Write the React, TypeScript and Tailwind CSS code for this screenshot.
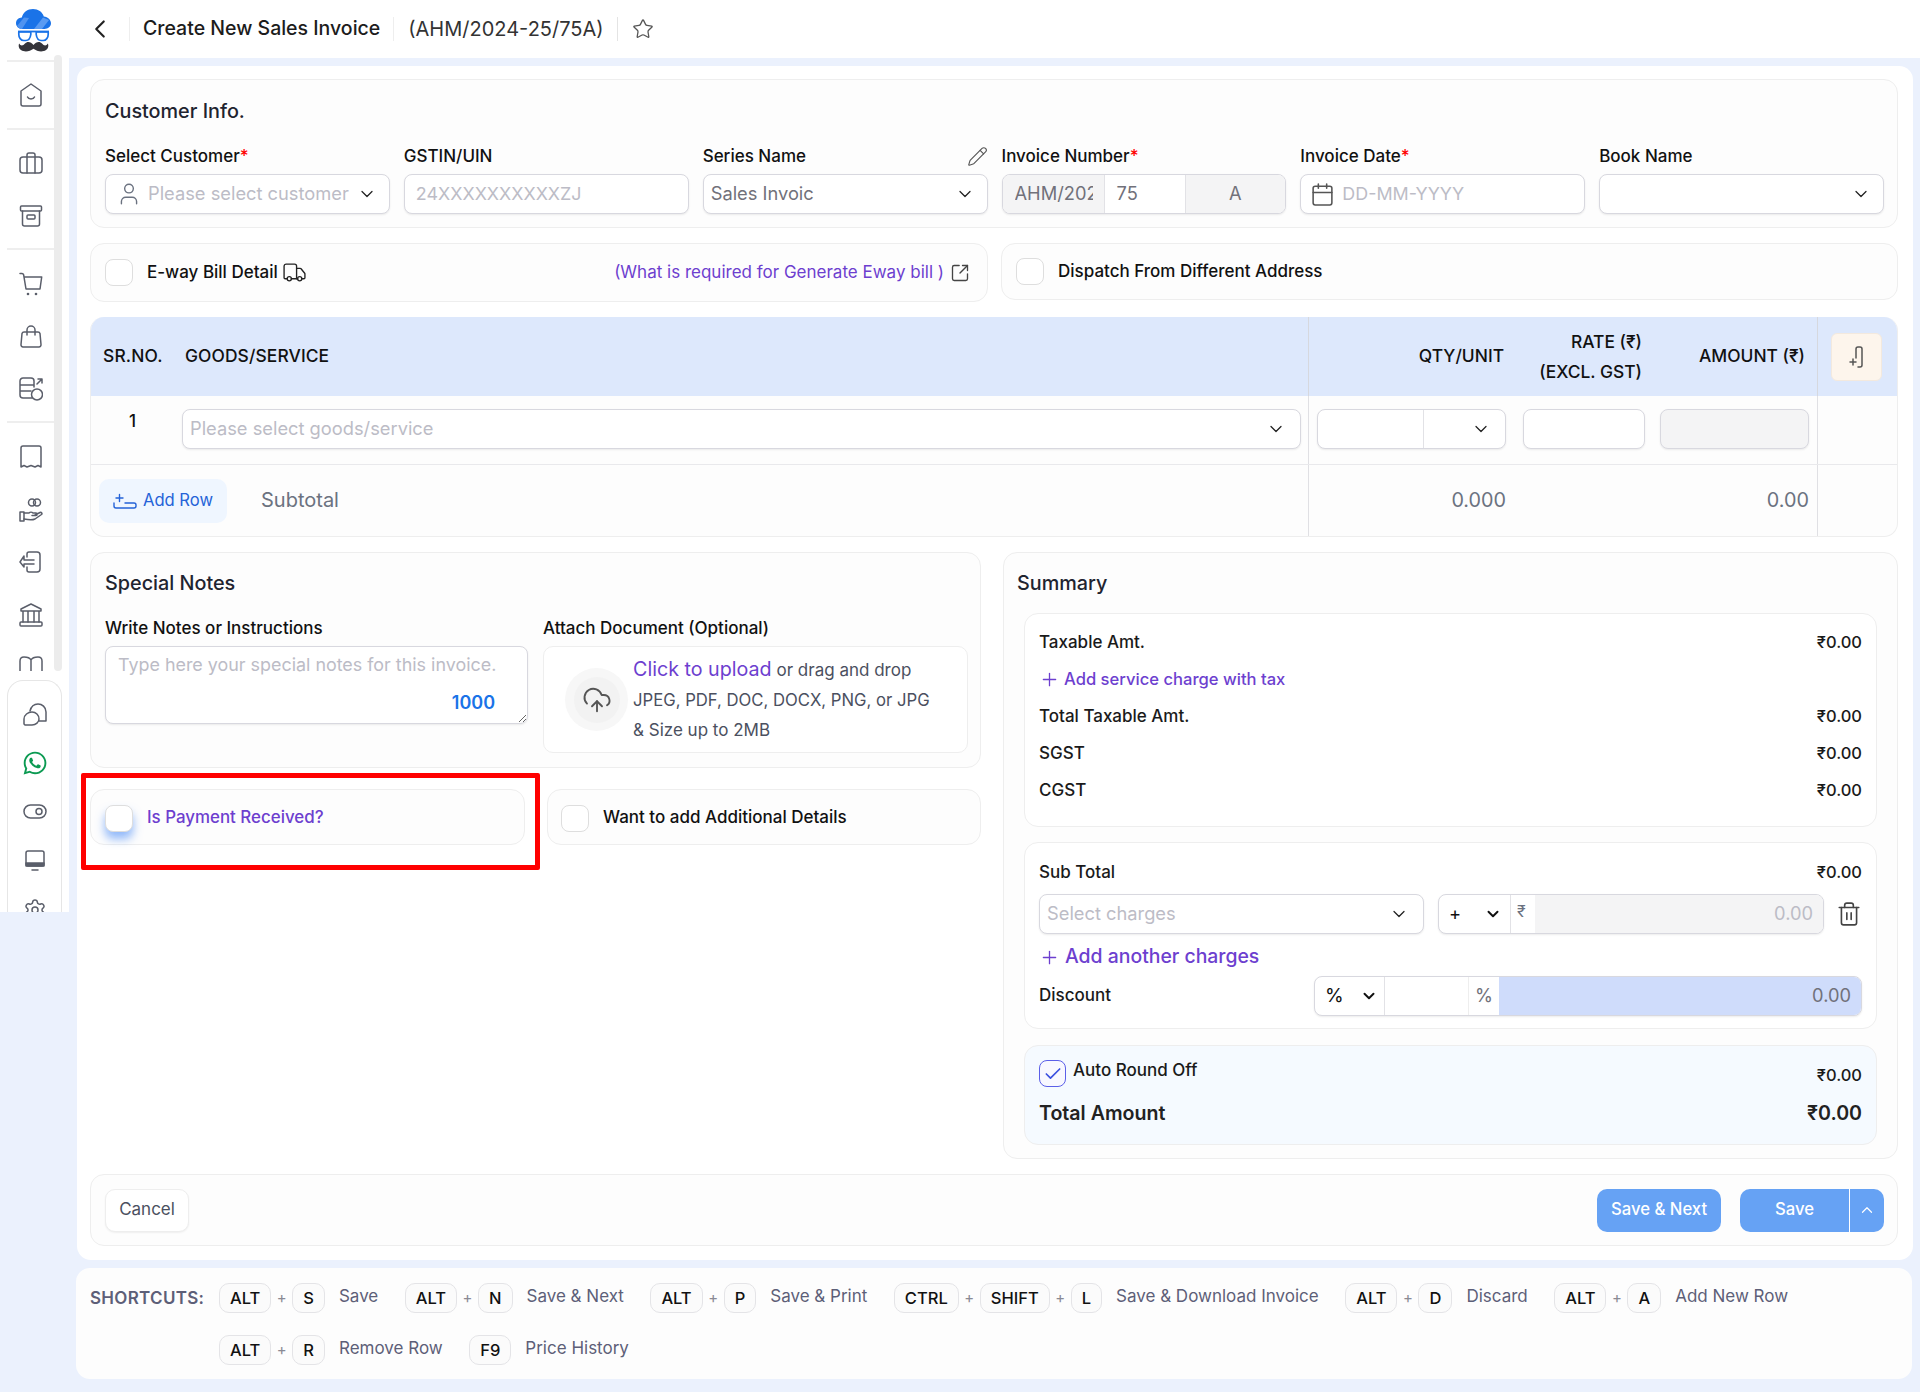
import React from "react";
import { ChevronLeft, ChevronDown, ChevronUp, Star, Pencil, Truck, SquareArrowOutUpRight, User, Calendar, CloudUpload, Trash2, Plus, Check, Settings } from "lucide-react";
import { FaWhatsapp } from "react-icons/fa";

const Ic = ({ children }: { children: React.ReactNode }) => (
  <svg width="24" height="24" viewBox="0 0 24 24" fill="none" stroke="#5a5e6a" strokeWidth="1.5" strokeLinecap="round" strokeLinejoin="round">{children}</svg>
);

const Logo = () => (
  <svg width="35" height="43" viewBox="0 0 35 43" fill="none">
    <path d="M6.5 20C2.9 20 0 17.5 0 14.2 0 11 2.5 8.6 5.8 8.4 7 3.5 11.5 0 17 0c5.2 0 9.4 3 10.8 7.4C32 8 35 10.8 35 14.3 35 17.6 32 20 28.5 20Z" fill="#1a73e8" />
    <path d="M1 17 8 8.5 13 9 6 20H4Z" fill="#4f93f0" />
    <path d="M18 20 27 8.5 33 11 26 20Z" fill="#5a9bf2" />
    <path d="M2 22.5H33" stroke="#1a73e8" strokeWidth="1.8" />
    <path d="M2.8 23v2.5c0 3 2 6 5 6h2c2.5 0 4.5-2.5 5-6V23ZM20.2 23v2.5c.5 3.5 2.5 6 5 6h2c3 0 5-3 5-6V23Z" stroke="#1a73e8" strokeWidth="1.7" strokeLinejoin="round" />
    <path d="M17.5 36C15 32.5 11 32 9 34.5 7 37 4.5 37 3.2 34.5 2 37 3 39.5 5 41 8.5 43.5 14 42.5 17.5 39.8 21 42.5 26.5 43.5 30 41 32 39.5 33 37 31.8 34.5 30.5 37 28 37 26 34.5 24 32 20 32.5 17.5 36Z" fill="#34343a" />
  </svg>
);

const icons: Record<string, React.ReactNode> = {
  home: <Ic><path d="M12 1 22 8V21a2 2 0 0 1-2 2H4a2 2 0 0 1-2-2V8Z" /><path d="M8.5 14c1 2.5 6 2.5 7 0" /></Ic>,
  brief: <Ic><rect x="1" y="6" width="22" height="16" rx="3" /><path d="M8 6V4a2 2 0 0 1 2-2h4a2 2 0 0 1 2 2v2M8 6v16M16 6v16" /></Ic>,
  archive: <Ic><rect x="1.5" y="2" width="21" height="5" rx="1" /><path d="M3.5 7v13a2 2 0 0 0 2 2h13a2 2 0 0 0 2-2V7" /><rect x="8" y="11" width="8" height="4" rx="1" /></Ic>,
  cart: <Ic><path d="M1 1.5h2c.8 0 1.4.5 1.6 1.2L7 17h14l1.7-12H5" /><circle cx="9" cy="22" r="1.3" fill="#5a5e6a" stroke="none" /><circle cx="17" cy="22" r="1.3" fill="#5a5e6a" stroke="none" /></Ic>,
  bag: <Ic><path d="M5 7h14c1 0 1.7.6 2 1.5l1 11c.1 1.5-.8 2.5-2 2.5H4c-1.2 0-2.1-1-2-2.5l1-11C3.3 7.6 4 7 5 7z" /><path d="M8 10V5a4 4 0 0 1 8 0v5" /></Ic>,
  data: <Ic><path d="M13 21H4a3 3 0 0 1-3-3V4a3 3 0 0 1 3-3h8a3 3 0 0 1 3 3v6M1 8h14M1 14h11" /><circle cx="18" cy="17.5" r="5.5" /><path d="m18 7 5-5M19 2h4v4" /></Ic>,
  receipt: <Ic><path d="M2 3a2 2 0 0 1 2-2h16a2 2 0 0 1 2 2v19l-3-1.5-3 1.5-4-1.5-4 1.5-3-1.5-3 1.5z" /></Ic>,
  hand: <Ic><circle cx="13" cy="4.5" r="3.5" /><circle cx="18" cy="4.5" r="3.5" /><rect x="1" y="14" width="4" height="9" /><path d="M5 15h5c1-1 3-1 4 0h3c1.5 0 1.5 2.5 0 2.5h-4M16 17l5-2.5c1.5-.5 2.5 1 1.5 2L16 21c-2 1-6 1-11 0" /></Ic>,
  login: <Ic><path d="M8 7V4a2 2 0 0 1 2-2h8c2 0 3 1 3 3v14c0 2-1 3-3 3h-8a2 2 0 0 1-2-2v-3" /><path d="M15 10H5V6L1 12l4 5v-3h10" /></Ic>,
  bank: <Ic><path d="M12 1 2 6v2h20V6zM4 8v11M9 8v11M15 8v11M20 8v11" /><rect x="1" y="19" width="22" height="4" rx="1" /></Ic>,
  book: <Ic><path d="M1 22V6c0-2 1-4 4-4 3 0 6 1 7 3 1-2 4-3 7-3 3 0 4 2 4 4v16M12 5v17" /></Ic>,
  chat: <Ic><path d="M7 9C8 5 11 2 15 2c4 0 8 3 8 8v9h-7" /><path d="M9 10a7 7 0 0 1 7 7c0 3-3 6-7 6H2l-1-1v-5c0-4 4-7 8-7z" /></Ic>,
  toggle: <Ic><rect x="1" y="5" width="22" height="13" rx="6.5" /><circle cx="16" cy="11.5" r="3" /></Ic>,
  monitor: <Ic><rect x="3" y="2" width="18" height="15" rx="2" /><path d="M3 14h18v3H3z" fill="#5a5e6a" /><path d="M9 21h6" /></Ic>,
};

const SideRow = ({ name }: { name: string }) => (
  <div className="h-[52.5px] shrink-0 flex items-center justify-center">{icons[name]}</div>
);
const BotRow = ({ children }: { children: React.ReactNode }) => (
  <div className="h-[49px] shrink-0 flex items-center justify-center">{children}</div>
);

const Sidebar = () => (
  <div className="w-[69px] h-[912px] shrink-0 bg-white">
    <div className="flex">
      <div className="w-[47px] ml-[7px] h-[671px] overflow-hidden">
        <div className="h-[62px] border-b-2 border-[#eeeeee] flex items-start pt-[9px] pl-[9px]"><Logo /></div>
        <div className="h-[68px] border-b-2 border-[#eeeeee] pt-[7px]"><SideRow name="home" /></div>
        <div className="h-[120px] border-b-2 border-[#eeeeee] pt-[7px]"><SideRow name="brief" /><SideRow name="archive" /></div>
        <div className="h-[173px] border-b-2 border-[#eeeeee] pt-[8px]"><SideRow name="cart" /><SideRow name="bag" /><SideRow name="data" /></div>
        <div className="pt-[8px]"><SideRow name="receipt" /><SideRow name="hand" /><SideRow name="login" /><SideRow name="bank" /><SideRow name="book" /></div>
      </div>
      <div className="w-[8px] h-[616px] mt-[55px] rounded-full bg-[#ececec]" />
    </div>
    <div className="ml-[7px] mt-[9px] w-[55px] h-[232px] border border-b-0 border-[#e6e6e6] rounded-t-[16px] overflow-hidden pt-[8px] flex flex-col">
      <BotRow>{icons.chat}</BotRow>
      <BotRow><FaWhatsapp size={26} color="#0b9a52" /></BotRow>
      <BotRow>{icons.toggle}</BotRow>
      <BotRow>{icons.monitor}</BotRow>
      <BotRow><Settings size={24} color="#5a5e6a" strokeWidth={1.5} /></BotRow>
    </div>
  </div>
);

const Label = ({ children, req }: { children: React.ReactNode; req?: boolean }) => (
  <div className="text-[17px] leading-[24px] font-medium text-[#111111]">{children}{req && <span className="text-[#ff0000]">*</span>}</div>
);

const Chev = () => <ChevronDown size={20} strokeWidth={1.5} color="#222" className="shrink-0" />;
const inputCls = "h-[40px] border border-[#d8d8df] rounded-[8px] bg-white shadow-[0_1px_2px_rgba(0,0,0,0.08)] text-[18.3px]";

const Box = ({ className = "", children }: { className?: string; children: React.ReactNode }) => (
  <div className={`border border-[#eeeeee] rounded-[14px] bg-[#fdfdfd] ${className}`}>{children}</div>
);

const Checkbox = ({ extra = "" }: { extra?: string }) => (
  <div className={`w-[28px] h-[27px] shrink-0 border border-[#dedede] rounded-[8px] bg-white ${extra}`} />
);

const CustomerInfo = () => (
  <Box className="h-[149px] pl-[14px] pr-[13px] pt-[19px]">
    <div className="text-[19.8px] leading-[24px] font-medium text-[#1f2430]">Customer Info.</div>
    <div className="grid grid-cols-6 gap-x-[14px] mt-[21px]">
      <div>
        <Label req>Select Customer</Label>
        <div className={`${inputCls} mt-[6px] flex items-center pl-[10px] pr-[12px] text-[#bcbcc6]`}>
          <User size={26} strokeWidth={1.3} color="#6b7280" className="shrink-0" />
          <span className="ml-[6px] flex-1 whitespace-nowrap overflow-hidden">Please select customer</span>
          <Chev />
        </div>
      </div>
      <div>
        <Label>GSTIN/UIN</Label>
        <div className={`${inputCls} mt-[6px] flex items-center pl-[11px] text-[#bcbcc6]`}><span className="text-[17.9px]">24XXXXXXXXXXZJ</span></div>
      </div>
      <div>
        <div className="flex items-center justify-between">
          <Label>Series Name</Label>
          <Pencil size={21} strokeWidth={1.3} color="#555" />
        </div>
        <div className={`${inputCls} mt-[6px] flex items-center justify-between pl-[7px] pr-[12px] text-[#71717a]`}>
          <span>Sales Invoic</span><Chev />
        </div>
      </div>
      <div>
        <Label req>Invoice Number</Label>
        <div className={`${inputCls} mt-[6px] flex overflow-hidden text-[#71717a]`}>
          <div className="w-[102px] bg-[#f4f4f5] pl-[12px] flex items-center whitespace-nowrap border-r border-[#e2e2e6]"><span className="w-[78px] overflow-hidden">AHM/2024</span></div>
          <div className="w-[81px] bg-white pl-[12px] flex items-center border-r border-[#e2e2e6]">75</div>
          <div className="flex-1 bg-[#f4f4f5] flex items-center justify-center">A</div>
        </div>
      </div>
      <div>
        <Label req>Invoice Date</Label>
        <div className={`${inputCls} mt-[6px] flex items-center pl-[9px] text-[#bcbcc6]`}>
          <Calendar size={25} strokeWidth={1.5} color="#555" />
          <span className="ml-[7px] text-[17.9px]">DD-MM-YYYY</span>
        </div>
      </div>
      <div>
        <Label>Book Name</Label>
        <div className={`${inputCls} mt-[6px] flex items-center justify-end pr-[12px]`}><Chev /></div>
      </div>
    </div>
  </Box>
);

const ToggleRow = () => (
  <div className="flex justify-between items-start mt-[15px]">
    <Box className="w-[898px] h-[59px] flex items-center pl-[14px] pr-[17px]">
      <Checkbox />
      <span className="ml-[14px] text-[17px] font-medium text-[#111]">E-way Bill Detail</span>
      <Truck size={25} strokeWidth={1.3} color="#222" className="ml-[4px]" />
      <span className="ml-auto text-[17px] text-[#6d3fcf]">(What is required for Generate Eway bill )</span>
      <SquareArrowOutUpRight size={20} strokeWidth={1.6} color="#444" className="ml-[6px]" />
    </Box>
    <Box className="w-[897px] h-[57px] flex items-center pl-[14px]">
      <Checkbox />
      <span className="ml-[14px] text-[17px] font-medium text-[#111]">Dispatch From Different Address</span>
    </Box>
  </div>
);

const Table = () => (
  <div className="mt-[15px] border border-[#eeeeee] border-t-0 rounded-[14px] overflow-hidden bg-[#fdfdfd]">
    <div className="h-[79px] flex bg-[#dde8fc] text-[17.4px] font-medium text-[#111]">
      <div className="w-[1217px] flex items-center pl-[12px]">
        <span className="w-[82px] tracking-[0.15px]">SR.NO.</span>
        <span className="tracking-[0.1px]">GOODS/SERVICE</span>
      </div>
      <div className="w-[509px] border-l border-[#d6d8de] flex items-center pl-[8px] text-right">
        <div className="w-[187px]">QTY/UNIT</div>
        <div className="w-[122px] ml-[19px] leading-[30px] pr-[3px]">RATE (₹)<br />(EXCL. GST)</div>
        <div className="w-[149px] ml-[15px] pr-[4px]">AMOUNT (₹)</div>
      </div>
      <div className="flex-1 border-l border-[#d6d8de] flex items-center pl-[13px]">
        <div className="w-[51px] h-[48px] rounded-[6px] bg-[#fdf5ec] border border-[#f3e9de] flex items-center justify-center">
          <svg width="24" height="26" viewBox="0 0 24 24" fill="none" stroke="#555" strokeWidth="1.5" strokeLinecap="round"><path d="M11 13V4a2 2 0 0 1 2-2h2a2 2 0 0 1 2 2v16a2 2 0 0 1-2 2h-2" /><path d="M5 17h6M8 14v6" /></svg>
        </div>
      </div>
    </div>
    <div className="h-[69px] flex border-b border-[#e9e9ec]">
      <div className="w-[1217px] flex pl-[13px] pt-[13px]">
        <span className="w-[78px] pl-[25px] text-[17px] font-medium leading-[24px] text-[#111]">1</span>
        <div className={`${inputCls} w-[1119px] flex items-center justify-between pl-[7px] pr-[14px] text-[#bcbcc6]`}>
          <span>Please select goods/service</span><Chev />
        </div>
      </div>
      <div className="w-[509px] border-l border-[#e0e0e4] flex pt-[13px] pl-[8px]">
        <div className={`${inputCls} w-[189px] flex overflow-hidden`}>
          <div className="w-[106px] border-r border-[#e2e2e6]" />
          <div className="flex-1 flex items-center justify-end pr-[14px]"><Chev /></div>
        </div>
        <div className={`${inputCls} w-[122px] ml-[17px]`} />
        <div className={`${inputCls} w-[149px] ml-[15px] !bg-[#f4f4f5]`} />
      </div>
      <div className="flex-1 border-l border-[#e0e0e4]" />
    </div>
    <div className="h-[71px] flex">
      <div className="w-[1217px] flex items-center pl-[8px]">
        <div className="w-[128px] h-[44px] rounded-[10px] bg-[#eff6ff] flex items-center justify-center gap-[6px] text-[16.6px] text-[#2563d8]">
          <svg width="24" height="18" viewBox="0 0 24 18" fill="none" stroke="#2563d8" strokeWidth="1.4" strokeLinecap="round"><path d="M1 11v3a2 2 0 0 0 2 2h18a2 2 0 0 0 2-2v-1a2 2 0 0 0-2-2H12" /><path d="M3 6h7M6.5 2.5v7" /></svg>
          <span>Add Row</span>
        </div>
        <span className="ml-[34px] mb-[2px] text-[20px] text-[#6b7280]">Subtotal</span>
      </div>
      <div className="w-[509px] border-l border-[#e0e0e4] flex items-center pl-[8px] text-[19.8px] text-[#6b7280] text-right">
        <div className="w-[189px]">0.000</div>
        <div className="w-[303px]">0.00</div>
      </div>
      <div className="flex-1 border-l border-[#e0e0e4]" />
    </div>
  </div>
);

const SpecialNotes = () => (
  <Box className="h-[216px] pl-[14px] pr-[12px] pt-[17px]">
    <div className="text-[19.8px] leading-[26px] font-medium text-[#1f2430]">Special Notes</div>
    <div className="flex mt-[20px]">
      <div className="w-[423px] shrink-0">
        <Label>Write Notes or Instructions</Label>
        <div className="relative mt-[6px]">
          <textarea
            className="block w-[423px] h-[78px] resize-y border border-[#d8d8df] rounded-[8px] bg-white shadow-[0_1px_2px_rgba(0,0,0,0.08)] px-[12px] py-[5px] text-[17.9px] outline-none placeholder:text-[#bcbcc6]"
            placeholder="Type here your special notes for this invoice."
          />
          <span className="absolute right-[33px] bottom-[8px] text-[18px] font-semibold text-[#1a73e8]">1000</span>
        </div>
      </div>
      <div className="ml-[15px] flex-1">
        <Label>Attach Document (Optional)</Label>
        <div className="mt-[6px] h-[107px] border border-[#eeeeee] rounded-[10px] bg-white flex items-center pl-[21px]">
          <div className="w-[63px] h-[63px] rounded-full bg-[#f7f7f7] flex items-center justify-center shrink-0">
            <div className="w-[46px] h-[46px] rounded-full bg-[#f2f2f2] flex items-center justify-center">
              <CloudUpload size={30} strokeWidth={1.5} color="#555" />
            </div>
          </div>
          <div className="ml-[5px] text-[17px] leading-[30px] text-[#4b5060] whitespace-nowrap">
            <div><span className="text-[19.7px] text-[#6d3fcf]">Click to upload</span> or drag and drop</div>
            <div className="text-[16.7px]">JPEG, PDF, DOC, DOCX, PNG, or JPG</div>
            <div>&amp; Size up to 2MB</div>
          </div>
        </div>
      </div>
    </div>
  </Box>
);

const PaymentRow = () => (
  <div className="relative flex justify-between mt-[21px]">
    <Box className="w-[435px] h-[56px] flex items-center pl-[14px] pt-[2px]">
      <Checkbox extra="shadow-[0_7px_10px_rgba(59,130,246,0.55)]" />
      <span className="ml-[14px] text-[16.9px] font-medium text-[#6d3fcf]">Is Payment Received?</span>
    </Box>
    <Box className="w-[434px] h-[56px] flex items-center pl-[13px] pt-[2px]">
      <Checkbox />
      <span className="ml-[14px] text-[17px] font-medium text-[#111]">Want to add Additional Details</span>
    </Box>
    <div className="absolute left-[-9px] top-[-16px] w-[459px] h-[97px] border-[5px] border-[#ff0000] rounded-[2px] pointer-events-none" />
  </div>
);

const SumRow = ({ l, r = "₹0.00" }: { l: string; r?: string }) => (
  <div className="h-[37px] flex items-center justify-between text-[17px] text-[#1a1a1a] font-medium">
    <span>{l}</span><span className="text-[16.5px]">{r}</span>
  </div>
);

const Summary = () => (
  <Box className="w-[895px] h-[607px] px-[20px] pt-[17px]">
    <div className="ml-[-7px] text-[19.8px] leading-[26px] font-medium text-[#1f2430]">Summary</div>
    <div className="mt-[17px] h-[214px] border border-[#eeeeee] rounded-[14px] bg-white px-[14px] pt-[10px]">
      <SumRow l="Taxable Amt." />
      <div className="h-[37px] flex items-center text-[16.6px] font-medium text-[#6d3fcf]">
        <Plus size={21} strokeWidth={1.5} className="mr-[4px]" />Add service charge with tax
      </div>
      <SumRow l="Total Taxable Amt." />
      <SumRow l="SGST" />
      <SumRow l="CGST" />
    </div>
    <div className="mt-[15px] h-[187px] border border-[#eeeeee] rounded-[14px] bg-white px-[14px] pt-[11px]">
      <SumRow l="Sub Total" />
      <div className="flex items-center mt-[3px]">
        <div className={`${inputCls} w-[385px] flex items-center justify-between pl-[7px] pr-[14px] text-[#bcbcc6]`}>
          <span>Select charges</span><Chev />
        </div>
        <div className={`${inputCls} w-[386px] ml-[14px] flex overflow-hidden`}>
          <div className="w-[72px] flex items-center justify-between pl-[10px] pr-[8px] border-r border-[#e2e2e6] text-[#111]">
            <span>+</span><ChevronDown size={18} strokeWidth={2.6} color="#111" />
          </div>
          <div className="w-[24px] flex items-start pt-[4px] pl-[6px] text-[#6b7280] text-[16px]">₹</div>
          <div className="flex-1 bg-[#f4f4f5] flex items-center justify-end pr-[10px] text-[#bcbcc6]">0.00</div>
        </div>
        <Trash2 size={26} strokeWidth={1.5} color="#444" className="ml-[12px]" />
      </div>
      <div className="mt-[8px] h-[30px] flex items-center text-[19.4px] font-medium text-[#6d3fcf]">
        <Plus size={21} strokeWidth={1.5} className="mr-[5px]" />Add another charges
      </div>
      <div className="mt-[4px] flex items-center justify-between">
        <span className="text-[17px] font-medium text-[#1a1a1a]">Discount</span>
        <div className={`${inputCls} w-[548px] flex overflow-hidden`}>
          <div className="w-[70px] flex items-center justify-between pl-[10px] pr-[6px] border-r border-[#e2e2e6] text-[#111] text-[19px]">
            <span>%</span><ChevronDown size={18} strokeWidth={2.6} color="#111" />
          </div>
          <div className="w-[84px] border-r border-[#eeeeee]" />
          <div className="w-[30px] flex items-center justify-center text-[#71717a]">%</div>
          <div className="flex-1 bg-[#cfdcfb] flex items-center justify-end pr-[10px] text-[#71717a]">0.00</div>
        </div>
      </div>
    </div>
    <div className="mt-[16px] h-[100px] border border-[#eeeeee] rounded-[14px] bg-[#f5faff] px-[14px] pt-[14px]">
      <div className="flex justify-between items-start">
        <div className="flex items-start">
          <div className="w-[27px] h-[27px] border-[1.5px] border-[#5b5fe8] rounded-[8px] bg-[#f8f8ff] flex items-center justify-center">
            <Check size={20} strokeWidth={2} color="#3b50e0" />
          </div>
          <span className="ml-[7px] text-[17px] leading-[20px] font-medium text-[#1a1a1a]">Auto Round Off</span>
        </div>
        <span className="mt-[5px] text-[16.5px] leading-[20px] font-medium text-[#1a1a1a]">₹0.00</span>
      </div>
      <div className="mt-[13px] flex justify-between text-[19.6px] leading-[26px] font-semibold text-[#222]">
        <span>Total Amount</span><span>₹0.00</span>
      </div>
    </div>
  </Box>
);

const Actions = () => (
  <Box className="mt-[15px] h-[72px] flex items-center justify-between pl-[14px] pr-[13px]">
    <div className="w-[84px] h-[43px] rounded-[10px] border border-[#eeeeee] bg-white shadow-[0_1px_2px_rgba(0,0,0,0.06)] flex items-center justify-center text-[17px] text-[#4b5060]">Cancel</div>
    <div className="flex items-center text-[16.7px] font-medium text-white">
      <div className="w-[124px] h-[43px] rounded-[10px] bg-[#66a2f4] flex items-center justify-center">Save &amp; Next</div>
      <div className="ml-[19px] w-[144px] h-[43px] rounded-[10px] bg-[#66a2f4] flex overflow-hidden">
        <div className="w-[110px] flex items-center justify-center border-r border-white">Save</div>
        <div className="flex-1 flex items-center justify-center"><ChevronUp size={18} strokeWidth={1.6} color="#fff" /></div>
      </div>
    </div>
  </Box>
);

const Key = ({ k }: { k: string }) => (
  <span className="h-[30px] px-[10px] border border-[#e4e4e7] rounded-[10px] bg-[#fbfbfb] flex items-center text-[16.5px] font-medium text-[#111]">{k}</span>
);
const Sc = ({ keys, label }: { keys: string[]; label: string }) => (
  <div className="flex items-center shrink-0 mr-[26.5px]">
    {keys.map((k, i) => (
      <React.Fragment key={k}>
        {i > 0 && <span className="w-[21px] text-center text-[15px] text-[#8a8a94]">+</span>}
        <Key k={k} />
      </React.Fragment>
    ))}
    <span className="ml-[14px] mb-[2px] text-[17px] text-[#5d5f78] whitespace-nowrap">{label}</span>
  </div>
);

const Shortcuts = () => (
  <div className="mt-[8px] ml-[-1px] mr-[1px] h-[111px] rounded-[14px] bg-[#fdfdfd] flex pl-[14px] pt-[15px]">
    <div className="w-[129px] shrink-0 h-[30px] mt-[1px] flex items-center text-[17px] font-semibold tracking-[0.3px] text-[#5d5f78] whitespace-nowrap">SHORTCUTS:</div>
    <div>
      <div className="flex">
        <Sc keys={["ALT", "S"]} label="Save" />
        <Sc keys={["ALT", "N"]} label="Save & Next" />
        <Sc keys={["ALT", "P"]} label="Save & Print" />
        <Sc keys={["CTRL", "SHIFT", "L"]} label="Save & Download Invoice" />
        <Sc keys={["ALT", "D"]} label="Discard" />
        <Sc keys={["ALT", "A"]} label="Add New Row" />
      </div>
      <div className="flex mt-[22px]">
        <Sc keys={["ALT", "R"]} label="Remove Row" />
        <Sc keys={["F9"]} label="Price History" />
      </div>
    </div>
  </div>
);

export default function App() {
  return (
    <div className="w-[1920px] h-[1392px] flex bg-[#ebf1fd] overflow-hidden" style={{ fontFamily: "Inter, 'Noto Sans', sans-serif" }}>
      <Sidebar />
      <div className="flex-1 min-w-0 flex flex-col">
        <div className="h-[58px] bg-white flex items-center text-[20px] text-[#222]">
          <ChevronLeft size={30} strokeWidth={1.7} color="#222" className="ml-[16px]" />
          <div className="w-px h-[24px] bg-[#eeeeee] ml-[14px]" />
          <span className="ml-[13px] text-[19.5px] font-medium text-[#1c1c1c]">Create New Sales Invoice</span>
          <div className="w-px h-[24px] bg-[#eeeeee] ml-[13px]" />
          <span className="ml-[14px] text-[#333]">(AHM/2024-25/75A)</span>
          <div className="w-px h-[24px] bg-[#e4e4e4] ml-[13px]" />
          <Star size={22} strokeWidth={1.4} color="#555" className="ml-[14px]" />
        </div>
        <div className="ml-[8px] mr-[7px] mt-[8px]">
          <div className="h-[1194px] rounded-[14px] bg-white pl-[13px] pr-[15px] pt-[13px]">
            <CustomerInfo />
            <ToggleRow />
            <Table />
            <div className="flex justify-between items-start mt-[15px]">
              <div className="w-[891px]">
                <SpecialNotes />
                <PaymentRow />
              </div>
              <Summary />
            </div>
            <Actions />
          </div>
          <Shortcuts />
        </div>
      </div>
    </div>
  );
}
